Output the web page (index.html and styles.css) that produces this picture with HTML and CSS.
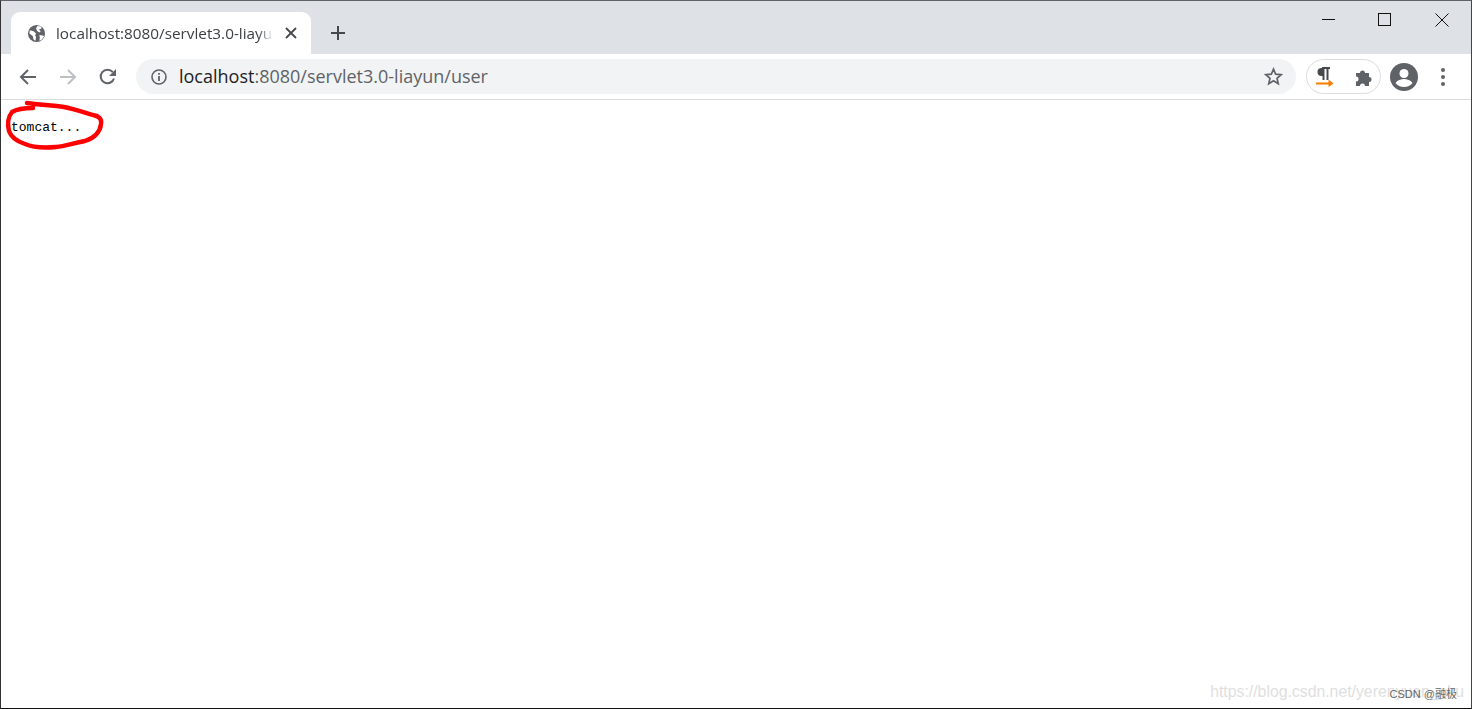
FILE: index.html
```html
<!DOCTYPE html>
<html lang="en">
<head>
<meta charset="utf-8">
<title>localhost:8080/servlet3.0-liayun</title>
<link rel="stylesheet" href="styles.css">
</head>
<body>
<div class="window">
  <header class="tabstrip">
    <div class="tab">
      <svg class="favicon" viewBox="0 0 20 20"><circle cx="10" cy="10" r="9" fill="#5f6368"/><path d="M3 6.500l4 1 2.500 2.500-1 2 1 1.500-.5 4-2-1-1-4-3.500-2.500zM11 2l3.500.5 1 2-3 1.500 2 1.500-1.500 1.500-2.500-2-1-2.500zM13 11.500l3.500.5 1.500 1-2.500 3.500-2.500 1 .5-3z" fill="#fff"/></svg>
      <span class="tab-title">localhost:8080/servlet3.0-liayun</span>
      <svg class="tab-close" viewBox="0 0 12 12"><path d="M1 1l10 10M11 1L1 11" stroke="#45484c" stroke-width="1.800" fill="none"/></svg>
    </div>
    <svg class="new-tab" viewBox="0 0 16 16"><path d="M8 1v14M1 8h14" stroke="#45484c" stroke-width="2" fill="none"/></svg>
    <div class="window-controls">
      <svg class="win-min" viewBox="0 0 13 13"><path d="M0 6.500h13" stroke="#111" fill="none"/></svg>
      <svg class="win-max" viewBox="0 0 13 13"><rect x=".5" y=".5" width="12" height="12" stroke="#111" fill="none"/></svg>
      <svg class="win-close" viewBox="0 0 14 14"><path d="M.5.5l13 13M13.500.5l-13 13" stroke="#111" fill="none"/></svg>
    </div>
  </header>
  <nav class="toolbar">
    <svg class="nav-icon" viewBox="0 0 18 18"><path d="M17 9H2.500M9 2L2 9l7 7" stroke="#5f6368" stroke-width="2" fill="none"/></svg>
    <svg class="nav-icon nav-forward" viewBox="0 0 18 18"><path d="M1 9h14.500M9 2l7 7-7 7" stroke="#bdc1c6" stroke-width="2" fill="none"/></svg>
    <svg class="nav-icon nav-reload" viewBox="0 0 18 18"><path d="M15 10.500A6.800 6.800 0 1 1 13.800 4.200" stroke="#5f6368" stroke-width="2" fill="none"/><path d="M17 1v7h-7z" fill="#5f6368"/></svg>
    <div class="omnibox">
      <svg class="info" viewBox="0 0 16 16"><circle cx="8" cy="8" r="7" stroke="#5f6368" stroke-width="1.600" fill="none"/><path d="M8 7v5M8 4v1.800" stroke="#5f6368" stroke-width="1.800" fill="none"/></svg>
      <span class="url"><span class="url-host">localhost</span>:8080/servlet3.0-liayun/user</span>
      <svg class="star" viewBox="0 0 20 20"><path d="M10 2.200l2.300 5.400 5.800.5-4.400 3.800 1.300 5.700-5-3-5 3 1.300-5.700L1.900 8.100l5.800-.5z" stroke="#5f6368" stroke-width="1.800" fill="none"/></svg>
    </div>
    <div class="extensions">
      <svg class="ext-para" viewBox="0 0 18 20"><path d="M7 1H5.500a4 4 0 0 0 0 8H7z" fill="#45484c"/><path d="M6 1h8M7.500 1v12M11.500 1v12" stroke="#45484c" stroke-width="2" fill="none"/><path d="M0 16.500h15" stroke="#f57c00" stroke-width="2" fill="none"/><path d="M12.500 12.500l5 4-5 3.500z" fill="#f57c00"/></svg>
      <svg class="ext-puzzle" viewBox="0 0 20 20"><path d="M2 6h4a2.500 2.500 0 1 1 5 0h4v4a2.500 2.500 0 1 1 0 5v4h-4a2.500 2.500 0 1 0-5 0H2v-4.500a2.500 2.500 0 1 0 0-5z" fill="#5f6368"/></svg>
    </div>
    <svg class="avatar" viewBox="0 0 28 28"><circle cx="14" cy="14" r="14" fill="#5f6368"/><circle cx="14" cy="10.500" r="4.500" fill="#fff"/><path d="M5.500 20c2-3 5.500-4 8.500-4s6.500 1 8.500 4c-2 2.500-5 4-8.500 4s-6.500-1.500-8.500-4z" fill="#fff"/></svg>
    <div class="menu"><i></i><i></i><i></i></div>
  </nav>
  <main class="page">
    <pre class="output">tomcat...</pre>
    <svg class="ink" viewBox="0 0 110 60"><path d="M33 13C24 13 17 14 12 17 8 22 7 28 9 36 11 42 16 46 25 49 34 53 45 53 56 52 66 51 73 48 85 46 94 43 100 38 101 29 102 24 99 21 93 20 83 17 74 14 64 12 52 10 40 10 27 8" stroke="#f00" stroke-width="4.400" stroke-linecap="round" stroke-linejoin="round" fill="none"/></svg>
    <div class="watermark">https://blog.csdn.net/yerenyuan_pku</div>
    <div class="credit">CSDN @融极</div>
  </main>
</div>
</body>
</html>
```
FILE: styles.css
```css
html, body { margin: 0; padding: 0; background: #fff; }
body { font-family: "Open Sans", "Noto Sans", sans-serif; overflow: hidden; }
.window {
  width: 1472px; height: 709px; box-sizing: border-box;
  display: flex; flex-direction: column; overflow: hidden;
  border: 1px solid #5f6368; border-left-color: #333; border-right-color: #444; border-bottom-color: #111;
}
.tabstrip { height: 53px; flex: none; background: #dee1e6; display: flex; align-items: flex-end; padding-left: 10px; }
.tab {
  width: 300px; height: 42px; box-sizing: border-box; background: #fff;
  border-radius: 9px 9px 0 0; display: flex; align-items: center; padding: 0 13px 0 16px;
}
.favicon { width: 19px; height: 19px; flex: none; margin-right: 10px; }
.tab-title {
  flex: none; width: 217px; overflow: hidden; white-space: nowrap; font-size: 15.300px; color: #3c4043;
  -webkit-mask-image: linear-gradient(90deg, #000 93%, transparent);
  mask-image: linear-gradient(90deg, #000 93%, transparent);
}
.tab-close { width: 12px; height: 12px; margin-left: 12px; flex: none; }
.new-tab { width: 16px; height: 16px; margin: 0 0 13px 19px; flex: none; }
.window-controls { margin-left: auto; align-self: flex-start; display: flex; align-items: center; height: 37px; padding-right: 22px; gap: 43px; }
.win-min { width: 13px; height: 13px; }
.win-max { width: 13px; height: 13px; }
.win-close { width: 14px; height: 14px; margin-left: 1px; }
.toolbar { height: 46px; flex: none; box-sizing: border-box; background: #fff; border-bottom: 1px solid #dadce0; display: flex; align-items: center; padding: 0 0 0 18px; }
.nav-icon { width: 18px; height: 18px; flex: none; margin-right: 22px; }
.nav-reload { margin-right: 19px; }
.omnibox { flex: none; width: 1160px; height: 35px; box-sizing: border-box; background: #f1f3f4; border-radius: 18px; display: flex; align-items: center; padding: 0 13px 0 15px; }
.info { width: 16px; height: 16px; flex: none; margin-right: 12px; }
.url { font-size: 18px; line-height: 24px; padding-bottom: 1px; color: #5f6368; white-space: nowrap; }
.url-host { color: #202124; }
.star { width: 19px; height: 19px; margin-left: auto; flex: none; }
.extensions { flex: none; width: 75px; height: 35px; box-sizing: border-box; margin-left: 10px; border: 1px solid #dadce0; border-radius: 18px; display: flex; align-items: center; padding-left: 9px; }
.ext-para { width: 18px; height: 20px; flex: none; }
.ext-puzzle { width: 20px; height: 20px; margin-left: 20px; flex: none; }
.avatar { width: 28px; height: 28px; flex: none; margin-left: 9px; }
.menu { display: flex; flex-direction: column; gap: 3px; margin-left: 23px; }
.menu i { display: block; width: 4px; height: 4px; border-radius: 50%; background: #5f6368; }
.page { flex: 1; position: relative; background: #fff; }
.output { margin: 0; padding: 21px 0 0 10px; font: 13px/14px "Liberation Mono", monospace; color: #000; }
.ink { position: absolute; left: -1px; top: -5px; width: 110px; height: 60px; }
.watermark { position: absolute; right: 7px; bottom: 7px; font: 15.800px "Liberation Sans", sans-serif; color: #e0e0e0; white-space: nowrap; }
.credit { position: absolute; right: 14px; bottom: 7px; font: 11px "Liberation Sans", "Noto Sans CJK SC", sans-serif; color: #666; white-space: nowrap; }
```
